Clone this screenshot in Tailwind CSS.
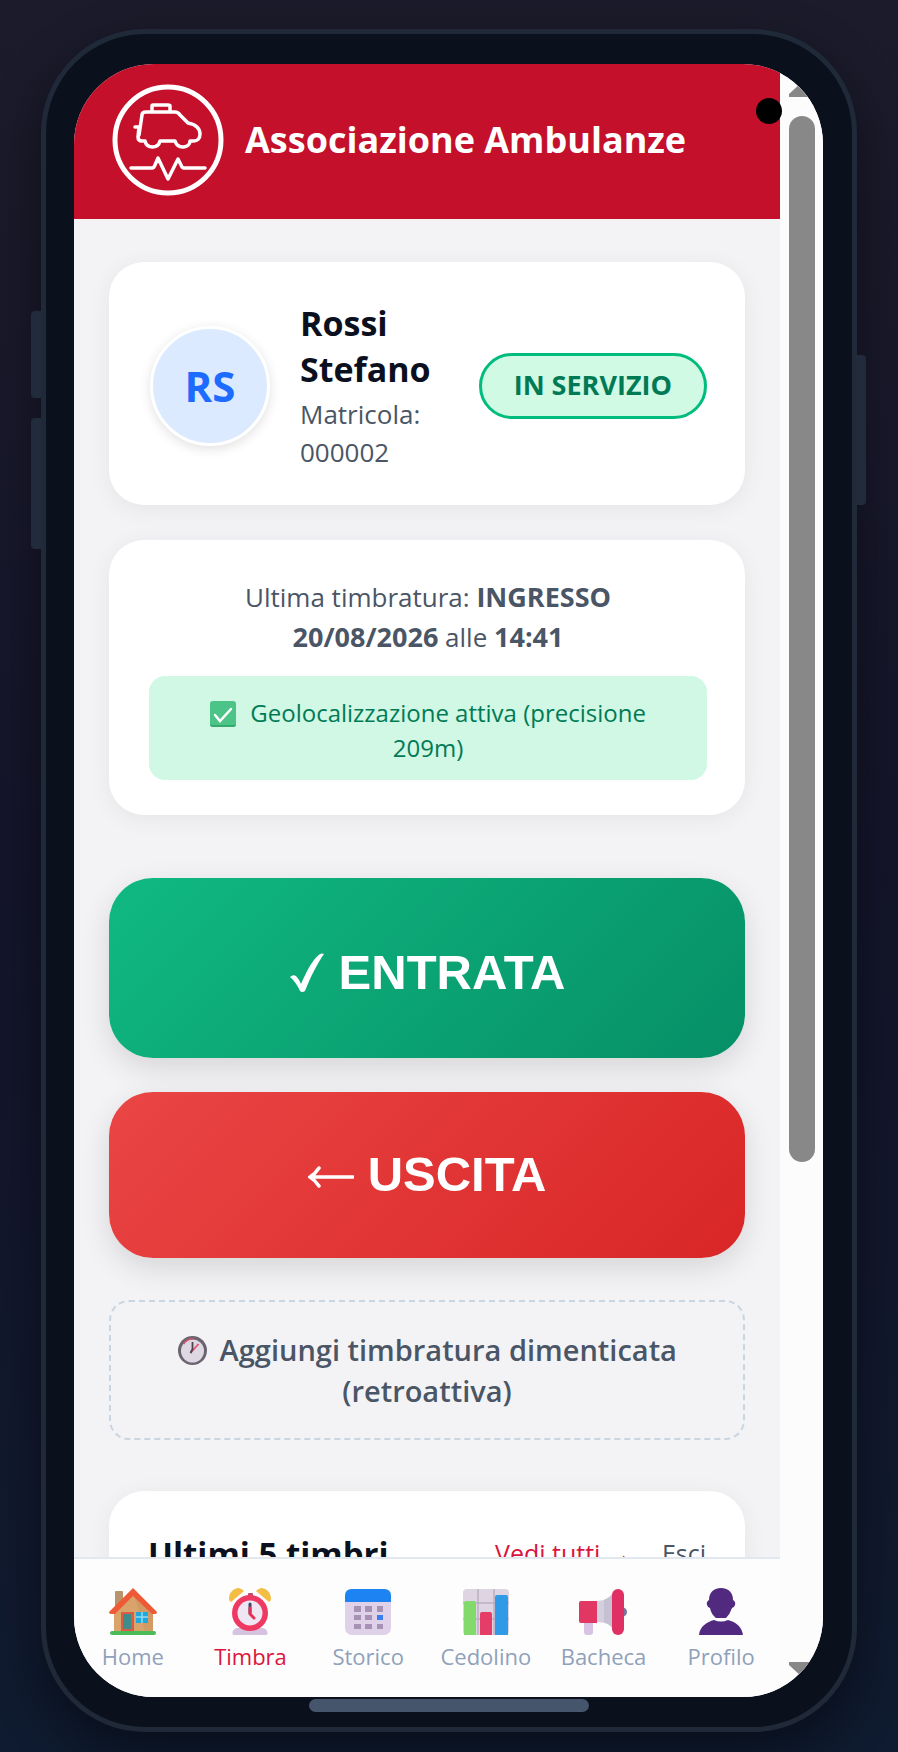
<!DOCTYPE html>
<html lang="it">
<head>
    <meta charset="UTF-8">
    <meta name="viewport" content="width=device-width, initial-scale=1.0">
    <title>Associazione Ambulanze - Timbra</title>
    <script src="https://cdn.jsdelivr.net/npm/@tailwindcss/browser@4"></script>
</head>
<body class="h-screen px-[41px] pt-[29px] pb-5 bg-linear-to-b from-[#1c1b2b] via-[#14152a] to-[#0f1b30] font-['Open_Sans','Noto_Sans',sans-serif] text-gray-600">
    <!-- Telefono -->
    <div class="relative h-full rounded-[104px] border-[5px] border-[#1f2937] bg-[#0b111c] pr-[29px] pl-7 py-[30px] shadow-[0_20px_50px_rgba(0,0,0,0.45)]">
        <!-- Tasti laterali -->
        <div class="absolute -left-[15px] top-[277px] h-[87px] w-[10px] rounded-l bg-[#212b3b]"></div>
        <div class="absolute -left-[15px] top-[384px] h-[131px] w-[10px] rounded-l bg-[#212b3b]"></div>
        <div class="absolute -right-[14px] top-[321px] h-[150px] w-[10px] rounded-r bg-[#212b3b]"></div>
        <!-- Fotocamera e barra home -->
        <div class="absolute right-[70px] top-[64px] z-10 size-[26px] rounded-full bg-black"></div>
        <div class="absolute bottom-[15px] left-1/2 h-[13px] w-[280px] -translate-x-1/2 rounded-full bg-slate-600"></div>

        <div class="flex h-full overflow-hidden rounded-[80px] bg-[#f3f3f5]">
            <div class="flex min-w-0 flex-1 flex-col">
                <header class="flex h-[155px] shrink-0 items-center gap-5 bg-[#c4102b] px-[37px] pb-1">
                    <svg class="size-[114px] shrink-0" viewBox="0 0 114 114" fill="none" stroke="white" stroke-width="4" stroke-linejoin="round" stroke-linecap="round">
                        <circle cx="57" cy="57" r="53" stroke-width="5"/>
                        <path stroke-width="3.5" d="M41 29v-6q0-1 1-1h15q2 0 2 1v6M28 52l3-20q0-3 4-3h29q3 0 5 3l8 8q6 1 9 4 3 3 3 7c0 5-3 7-6 7h-4c0 7-12 9-15 0H49c-2 8-13 8-15 0h-3q-4 0-4-4l1-10h-4"/>
                        <path stroke-width="3.5" d="M20 85h21q2 0 3-3l3-7 10 21 10-20 3 6q1 3 3 3h21"/>
                    </svg>
                    <h1 class="text-[36px] leading-[46px] font-bold text-white whitespace-nowrap">Associazione Ambulanze</h1>
                </header>

                <main class="flex min-h-0 flex-1 flex-col overflow-hidden px-[35px] pt-[43px]">
                    <section class="mb-[35px] flex shrink-0 items-center rounded-[35px] bg-white pr-[38px] pl-[41px] pt-[38px] pb-[34px] shadow-[0_4px_24px_rgba(0,0,0,0.06)]">
                        <div class="mr-[30px] flex size-[120px] shrink-0 items-center justify-center rounded-full border-3 border-white bg-blue-100 text-[42px] font-bold text-[#1d6bff] shadow-[0_3px_12px_rgba(0,0,0,0.12)]">RS</div>
                        <div class="min-w-0 flex-1">
                            <h2 class="w-min text-[34px] leading-[46px] font-bold text-[#0b1020]">Rossi Stefano</h2>
                            <p class="mt-[3px] text-[26px] leading-[38px]">Matricola: 000002</p>
                        </div>
                        <span class="flex h-[66px] shrink-0 items-center rounded-full border-3 border-emerald-500 bg-[#d1fae5] px-8 text-[27px] font-bold text-emerald-700">IN SERVIZIO</span>
                    </section>

                    <section class="mb-[63px] shrink-0 rounded-[35px] bg-white pr-[38px] pl-10 pt-[37px] pb-[35px] text-center shadow-[0_4px_24px_rgba(0,0,0,0.06)]">
                        <p class="text-[26px] leading-10">Ultima timbratura: <strong class="text-[27px]">INGRESSO</strong><br><strong class="text-[27px]">20/08/2026</strong> alle <strong class="text-[27px]">14:41</strong></p>
                        <div class="mt-[19px] rounded-2xl bg-[#d1f8e4] px-10 pt-[19px] pb-[15px] text-[24px] leading-[35px] text-emerald-700">
                            <svg class="mr-2 inline-block size-[26px] align-[-5px]" viewBox="0 0 26 26">
                                <rect width="26" height="26" rx="3" fill="#4cc487"/>
                                <path d="M0 22v1q0 3 3 3h20q3 0 3-3v-1q0 2-3 2H3q-3 0-3-2z" fill="#36a96e"/>
                                <path d="M5 14l5 6L21 8" fill="none" stroke="white" stroke-width="2.5" stroke-linecap="round"/>
                            </svg>
                            Geolocalizzazione attiva (precisione 209m)
                        </div>
                    </section>

                    <button class="mb-[34px] flex h-[180px] shrink-0 items-center justify-center gap-[14px] rounded-[44px] bg-linear-[135deg] from-[#10b981] to-[#068f66] pt-[10px] font-['Liberation_Sans',sans-serif] text-[49px] font-bold text-white shadow-[0_10px_30px_rgba(0,0,0,0.12)]">
                        <svg class="h-10 w-9" viewBox="0 0 36 40" fill="white"><path d="M1 24q3-3 6-1 3 3 5 8C17 20 22 8 31 1q2-1 4 0C28 11 22 23 16 38q-3 2-5 0Q7 29 1 24z"/></svg>
                        ENTRATA
                    </button>
                    <button class="mb-[42px] flex h-[166px] shrink-0 items-center justify-center gap-[14px] rounded-[44px] bg-linear-[135deg] from-[#ea4545] to-[#d92626] font-['Liberation_Sans',sans-serif] text-[49px] font-bold text-white shadow-[0_10px_30px_rgba(0,0,0,0.12)]">
                        <svg class="mt-1 h-6 w-[46px]" viewBox="0 0 46 24" fill="none" stroke="white" stroke-width="3.5" stroke-linecap="round"><path d="M3 12h42M11 3Q7 9 2 12q5 3 9 9"/></svg>
                        USCITA
                    </button>

                    <button class="mb-[51px] h-[140px] shrink-0 rounded-[20px] border-2 border-dashed border-slate-300 px-10 text-[29px] leading-[41px] font-semibold">
                        <svg class="mr-1 inline-block size-[31px] align-[-5px]" viewBox="0 0 30 31">
                            <circle cx="15" cy="15.500" r="14.500" fill="#6b6470"/>
                            <circle cx="15" cy="16" r="11.500" fill="#ded8e2"/>
                            <path d="M6 9a11 11 0 0 1 10-5" fill="none" stroke="#d45872" stroke-width="1.500"/>
                            <path d="M13 18l8-9" stroke="#e0526e" stroke-width="1.800"/>
                            <path d="M15 7v7l-2 4" fill="none" stroke="#4a444e" stroke-width="1.800"/>
                        </svg>
                        Aggiungi timbratura dimenticata (retroattiva)
                    </button>

                    <section class="flex shrink-0 items-center rounded-t-[35px] bg-white px-[39px] pt-[38px] pb-10 shadow-[0_4px_24px_rgba(0,0,0,0.06)]">
                        <h2 class="flex-1 text-[33px] leading-[50px] font-bold text-[#0b1020]">Ultimi 5 timbri</h2>
                        <a href="#" class="text-[25px] text-[#dc143c]">Vedi tutti →</a>
                        <a href="#" class="ml-[30px] text-[25px]">Esci</a>
                    </section>
                </main>

                <nav class="grid h-[140px] shrink-0 grid-cols-6 border-t-2 border-slate-200 bg-[#fdfdfe] text-[22px] leading-8 text-slate-400">
                    <a href="#" class="flex flex-col items-center gap-1 pt-[29px]">
                        <svg class="size-12" viewBox="0 0 48 48">
                            <path d="M6 4q0-1 1-1h6q1 0 1 1v16H6z" fill="#b9936e"/>
                            <path d="M5 22L24 4l20 18v21H5z" fill="#d9a36c"/>
                            <path d="M24 4l20 18v21h-8z" fill="#c98f59" opacity=".4"/>
                            <path d="M24 0l24 24q0 2-2 2h-3L24 8 6 26H2q-2 0-2-2z" fill="#ee5a35"/>
                            <rect x="12" y="24" width="13" height="19" fill="#dc5c43"/>
                            <rect x="14" y="26" width="8" height="15" fill="#3e8d8b"/>
                            <rect x="27" y="24" width="12" height="11" fill="#20a8dd"/>
                            <path d="M33 24v11M27 29h12" stroke="#94dcf3" stroke-width="1.500"/>
                            <rect x="1" y="43" width="46" height="4" rx="2" fill="#4bbb58"/>
                        </svg>
                        <span>Home</span>
                    </a>
                    <a href="#" class="flex flex-col items-center gap-1 pt-[29px] text-[#dc143c]">
                        <svg class="size-12" viewBox="0 0 48 48">
                            <path d="M3 11C3 4 8 0 13 0q3 1 5 3L5 14q-2-1-2-3zM45 11C45 4 40 0 35 0q-3 1-5 3l13 11q2-1 2-3z" fill="#f4bd44"/>
                            <path d="M7 47q-2-5 4-7h26q6 2 4 7z" fill="#d6c3e0"/>
                            <rect x="22" y="5" width="5" height="4" rx="1" fill="#b2506e"/>
                            <circle cx="24" cy="25" r="18" fill="#ee3a63"/>
                            <circle cx="24" cy="25" r="12.500" fill="#eee6f2"/>
                            <path d="M24 16v9" stroke="#3d4666" stroke-width="3" stroke-linecap="round"/>
                            <path d="M24 20v6l4 4" fill="none" stroke="#e23257" stroke-width="3" stroke-linecap="round"/>
                        </svg>
                        <span>Timbra</span>
                    </a>
                    <a href="#" class="flex flex-col items-center gap-1 pt-[29px]">
                        <svg class="size-12" viewBox="0 0 48 48">
                            <rect x="1" y="1" width="46" height="46" rx="7" fill="#dfd1e8"/>
                            <path d="M1 14V8q0-7 7-7h32q7 0 7 7v6z" fill="#1d83f2"/>
                            <path d="M10 18h7v6h-7zM21 18h7v6h-7zM33 18h6v6h-6zM10 27h7v5h-7zM21 27h7v5h-7zM10 36h7v5h-7zM21 36h7v5h-7zM33 36h6v5h-6z" fill="#a792b5"/>
                            <path d="M33 27h6v5h-6z" fill="#3c7df0"/>
                        </svg>
                        <span>Storico</span>
                    </a>
                    <a href="#" class="flex flex-col items-center gap-1 pt-[29px]">
                        <svg class="size-12" viewBox="0 0 48 48">
                            <rect x="1" y="1" width="46" height="46" rx="4" fill="#ded5e2"/>
                            <path d="M16 1v46M32 1v46M1 15h46M1 31h46" stroke="#bcaec4" stroke-width="1.500"/>
                            <path d="M2 47V15q0-2 2-2h8q2 0 2 2v32z" fill="#82da6c"/>
                            <path d="M18 47V26q0-2 2-2h8q2 0 2 2v21z" fill="#e63d68"/>
                            <path d="M33 47V9q0-2 2-2h9q2 0 2 2v38z" fill="#2f9be6"/>
                        </svg>
                        <span>Cedolino</span>
                    </a>
                    <a href="#" class="flex flex-col items-center gap-1 pt-[29px]">
                        <svg class="size-12" viewBox="0 0 48 48">
                            <path d="M5 32h9v12q0 3-3 3H8q-3 0-3-3z" fill="#d8c3e4"/>
                            <path d="M43 19q5 1 5 5t-5 5z" fill="#7b7398"/>
                            <path d="M17 13c8 0 14-3 18-9v38c-4-6-10-8-18-8z" fill="#d3cfdf"/>
                            <path d="M25 12q6-3 10-8v38q-4-6-10-8z" fill="#b7b3c8" opacity=".5"/>
                            <path d="M0 15q0-2 2-2h16v22H2q-2 0-2-2z" fill="#e33763"/>
                            <rect x="33" y="1" width="12" height="46" rx="6" fill="#e03063"/>
                        </svg>
                        <span>Bacheca</span>
                    </a>
                    <a href="#" class="flex flex-col items-center gap-1 pt-[29px]">
                        <svg class="size-12" viewBox="0 0 48 48" fill="#512a80">
                            <path d="M24 0c8 0 12 5 12 12q3 2 2 5-1 3-3 3-2 6-6 10H19q-5-4-6-10-2 0-3-3-1-3 2-5C12 5 16 0 24 0z"/>
                            <path d="M2 47c1-9 8-13 15-15q7 3 14 0c8 2 14 7 15 15z"/>
                        </svg>
                        <span>Profilo</span>
                    </a>
                </nav>
            </div>

            <!-- Barra di scorrimento -->
            <div class="flex w-[43px] shrink-0 flex-col items-center bg-[#fcfcfc] pt-[18px] pb-5">
                <svg class="h-[15px] w-[26px]" viewBox="0 0 26 15" fill="#888"><path d="M13 0l13 12v3H0v-3z"/></svg>
                <div class="mt-[19px] h-[1046px] w-[26px] rounded-full bg-[#888]"></div>
                <svg class="mt-auto h-[15px] w-[26px]" viewBox="0 0 26 15" fill="#888"><path d="M13 15L0 3V0h26v3z"/></svg>
            </div>
        </div>
    </div>
</body>
</html>
